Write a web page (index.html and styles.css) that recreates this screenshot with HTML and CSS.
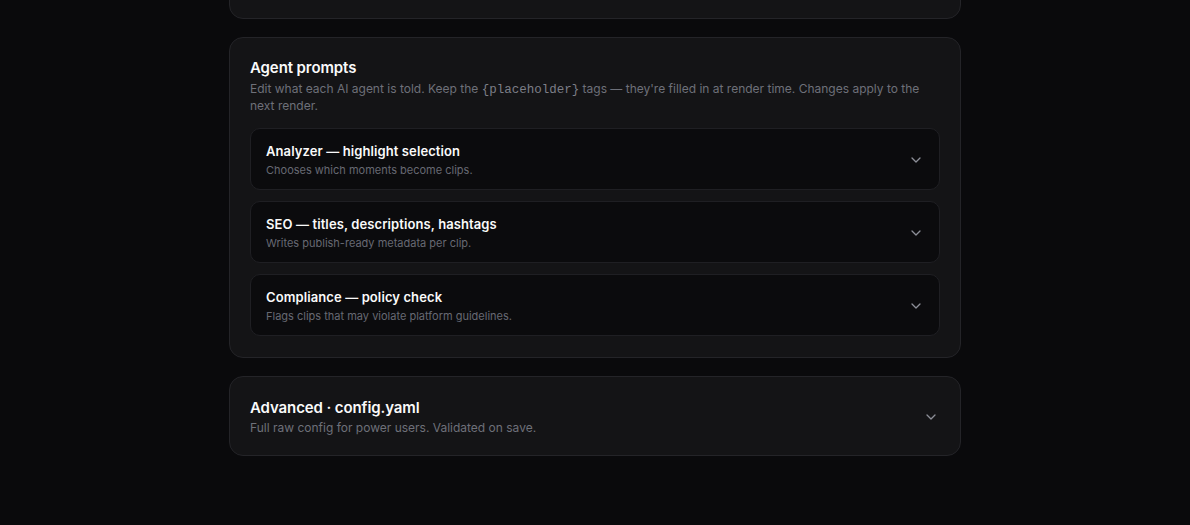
FILE: index.html
```html
<!DOCTYPE html>
<html lang="en">
<head>
<meta charset="utf-8">
<title>Settings</title>
<link rel="stylesheet" href="styles.css">
</head>
<body>
<main class="page">
  <section class="card card-prev"></section>

  <section class="card card-prompts">
    <h2 class="card-title">Agent prompts</h2>
    <p class="card-desc">Edit what each AI agent is told. Keep the <code>{placeholder}</code> tags — they're filled in at render time. Changes apply to the next render.</p>
    <div class="items">
      <div class="item">
        <div class="item-text">
          <div class="item-title">Analyzer — highlight selection</div>
          <div class="item-desc">Chooses which moments become clips.</div>
        </div>
        <svg class="chev" viewBox="0 0 10 6" width="10" height="6"><path d="M1 1l4 4 4-4" fill="none" stroke="currentColor" stroke-width="1.3" stroke-linecap="round" stroke-linejoin="round"/></svg>
      </div>
      <div class="item">
        <div class="item-text">
          <div class="item-title">SEO — titles, descriptions, hashtags</div>
          <div class="item-desc">Writes publish-ready metadata per clip.</div>
        </div>
        <svg class="chev" viewBox="0 0 10 6" width="10" height="6"><path d="M1 1l4 4 4-4" fill="none" stroke="currentColor" stroke-width="1.3" stroke-linecap="round" stroke-linejoin="round"/></svg>
      </div>
      <div class="item">
        <div class="item-text">
          <div class="item-title">Compliance — policy check</div>
          <div class="item-desc">Flags clips that may violate platform guidelines.</div>
        </div>
        <svg class="chev" viewBox="0 0 10 6" width="10" height="6"><path d="M1 1l4 4 4-4" fill="none" stroke="currentColor" stroke-width="1.3" stroke-linecap="round" stroke-linejoin="round"/></svg>
      </div>
    </div>
  </section>

  <section class="card card-row">
    <div class="item-text">
      <h2 class="card-title">Advanced · config.yaml</h2>
      <p class="card-desc">Full raw config for power users. Validated on save.</p>
    </div>
    <svg class="chev" viewBox="0 0 10 6" width="10" height="6"><path d="M1 1l4 4 4-4" fill="none" stroke="currentColor" stroke-width="1.3" stroke-linecap="round" stroke-linejoin="round"/></svg>
  </section>
</main>
</body>
</html>
```

FILE: styles.css
```css
* { box-sizing: border-box; }
html, body {
  margin: 0;
  padding: 0;
  background: #0a0a0c;
  font-family: Inter, "Noto Sans", "Liberation Sans", sans-serif;
  color: #f4f4f5;
  height: 525px;
  overflow: hidden;
}
.page {
  width: 732px;
  margin: 0 auto;
  display: flex;
  flex-direction: column;
  gap: 18px;
}
.card {
  background: #141416;
  border: 1px solid #242428;
  border-radius: 14px;
  padding: 20px;
}
.card-prev {
  height: 60px;
  margin-top: -41px;
}
.card-prompts { padding-bottom: 21px; }
.card-title {
  margin: 0;
  font-size: 15px;
  line-height: 20px;
  font-weight: 600;
  color: #fafafa;
  letter-spacing: -0.1px;
}
.card-desc {
  margin: 2px 0 0;
  font-size: 12px;
  line-height: 17px;
  color: #6e7079;
}
.card-desc code {
  font-family: "Liberation Mono", "DejaVu Sans Mono", monospace;
  font-size: 12.5px;
  line-height: 1;
  color: #7c7e87;
}
.items {
  margin-top: 14px;
  display: flex;
  flex-direction: column;
  gap: 11px;
}
.item {
  background: #0b0b0d;
  border: 1px solid #1f1f23;
  border-radius: 10px;
  padding: 15px 18px 12px 15px;
  display: flex;
  align-items: center;
  justify-content: space-between;
}
.item-title {
  font-size: 13px;
  line-height: 15px;
  font-weight: 600;
  color: #fafafa;
  letter-spacing: 0.1px;
}
.item-desc {
  margin-top: 4px;
  font-size: 11px;
  line-height: 14px;
  color: #676973;
}
.chev {
  color: #8d8f98;
  flex: none;
  display: block;
}
.item .chev { margin-top: -2px; }
.card-row {
  display: flex;
  align-items: center;
  justify-content: space-between;
  padding: 21px 24px 19px 20px;
}
.card-row .card-desc { margin-top: 1px; }
```
